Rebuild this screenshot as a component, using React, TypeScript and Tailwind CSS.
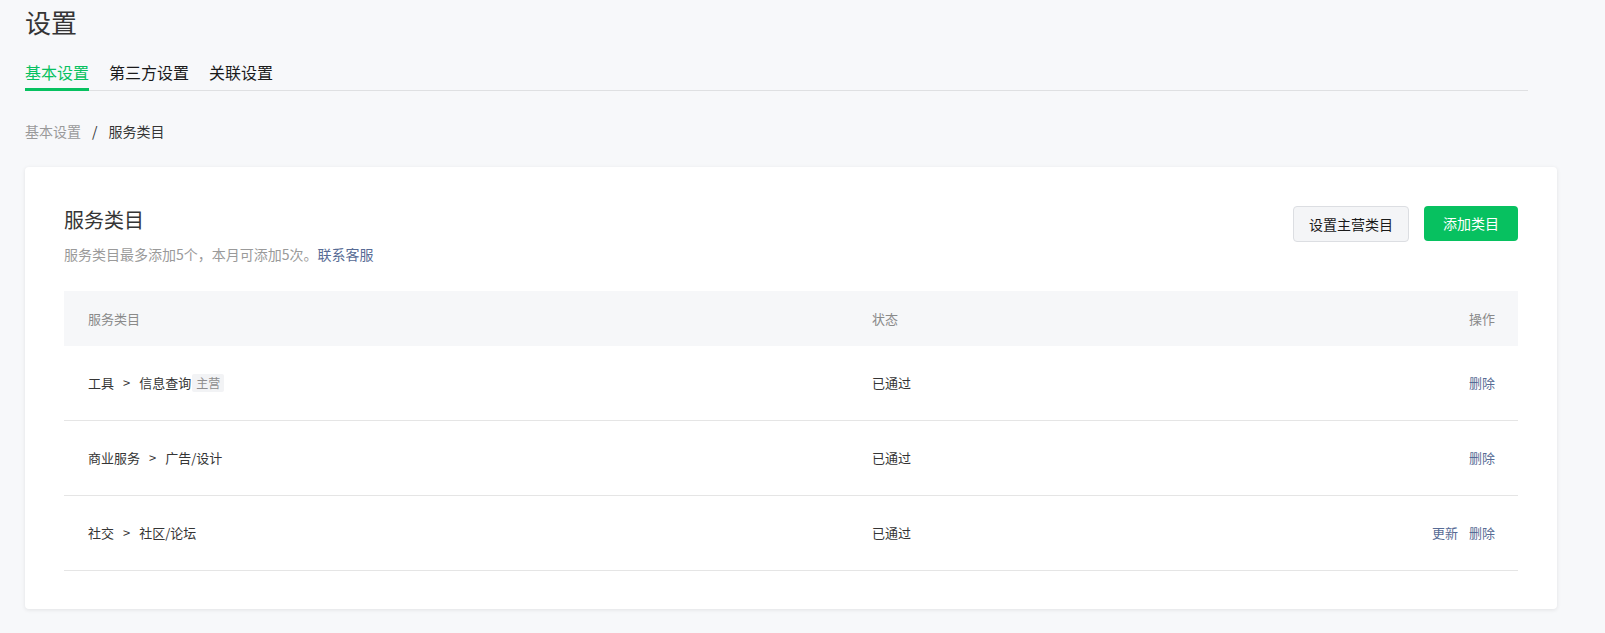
const rows = [
  { path: ["工具", "信息查询"], main: true, status: "已通过", ops: ["删除"] },
  { path: ["商业服务", "广告/设计"], main: false, status: "已通过", ops: ["删除"] },
  { path: ["社交", "社区/论坛"], main: false, status: "已通过", ops: ["更新", "删除"] },
];

export default function App() {
  return (
    <div
      className="min-h-[633px] w-[1605px] bg-[#f7f8fa] pl-[25px] text-[#353535]"
      style={{ fontFamily: '"Noto Sans CJK SC", "Noto Sans", sans-serif' }}
    >
      <h1 className="pt-[5px] text-[26px] leading-[34px] text-[#353535]">设置</h1>

      {/* tabs */}
      <div className="mt-[21px] flex w-[1503px] gap-5 border-b border-[#dfe0e2]">
        <div className="border-b-[3px] border-[#07c160] pb-[3px] -mb-px text-[16px] leading-[24px] text-[#07c160]">
          基本设置
        </div>
        <div className="pb-[6px] text-[16px] leading-[24px] text-[#1a1a1a]">第三方设置</div>
        <div className="pb-[6px] text-[16px] leading-[24px] text-[#1a1a1a]">关联设置</div>
      </div>

      {/* breadcrumb */}
      <div className="mt-[30px] flex items-center text-[14px] leading-[20px]">
        <span className="text-[#9a9a9a]">基本设置</span>
        <span className="mx-[11px] text-[#353535]">/</span>
        <span className="text-[#353535]">服务类目</span>
      </div>

      {/* card */}
      <div className="mt-[26px] w-[1532px] rounded-[4px] bg-white px-[39px] pt-[39px] pb-[38px] shadow-[0_1px_4px_rgba(0,0,0,0.09)]">
        <div className="flex items-start justify-between">
          <div>
            <div className="text-[20px] leading-[28px] text-[#353535]">服务类目</div>
            <div className="mt-[10px] text-[14px] leading-[20px] text-[#9a9a9a]">
              服务类目最多添加5个，本月可添加5次。
              <span className="text-[#576b95]">联系客服</span>
            </div>
          </div>
          <div className="flex gap-[15px]">
            <button className="h-[36px] rounded-[4px] border border-[#dcdee2] bg-[#f4f5f7] px-[15px] text-[14px] text-[#1a1a1a]">
              设置主营类目
            </button>
            <button className="h-[35px] rounded-[4px] bg-[#07c160] px-[19px] text-[14px] text-white">
              添加类目
            </button>
          </div>
        </div>

        <div className="mt-[27px] w-[1454px]">
          <div className="grid h-[55px] grid-cols-[808px_1fr_auto] items-center bg-[#f6f7f9] text-[13px] text-[#8a8a8a]">
            <div className="pl-6">服务类目</div>
            <div>状态</div>
            <div className="pr-[23px] text-right">操作</div>
          </div>
          {rows.map((r, i) => (
            <div
              key={i}
              className="grid h-[75px] grid-cols-[808px_1fr_auto] items-center border-b border-[#e5e5e5] text-[13px] text-[#353535]"
            >
              <div className="flex items-center pl-6">
                <span>{r.path[0]}</span>
                <span className="mx-[9px]">&gt;</span>
                <span>{r.path[1]}</span>
                {r.main && (
                  <span className="ml-[1px] rounded-[2px] bg-[#f2f3f5] px-[4px] text-[12px] leading-[18px] text-[#8d8d8d]">
                    主营
                  </span>
                )}
              </div>
              <div>{r.status}</div>
              <div className="flex gap-[11px] pr-[23px] text-[#576b95]">
                {r.ops.map((o) => (
                  <span key={o}>{o}</span>
                ))}
              </div>
            </div>
          ))}
        </div>
      </div>
    </div>
  );
}
